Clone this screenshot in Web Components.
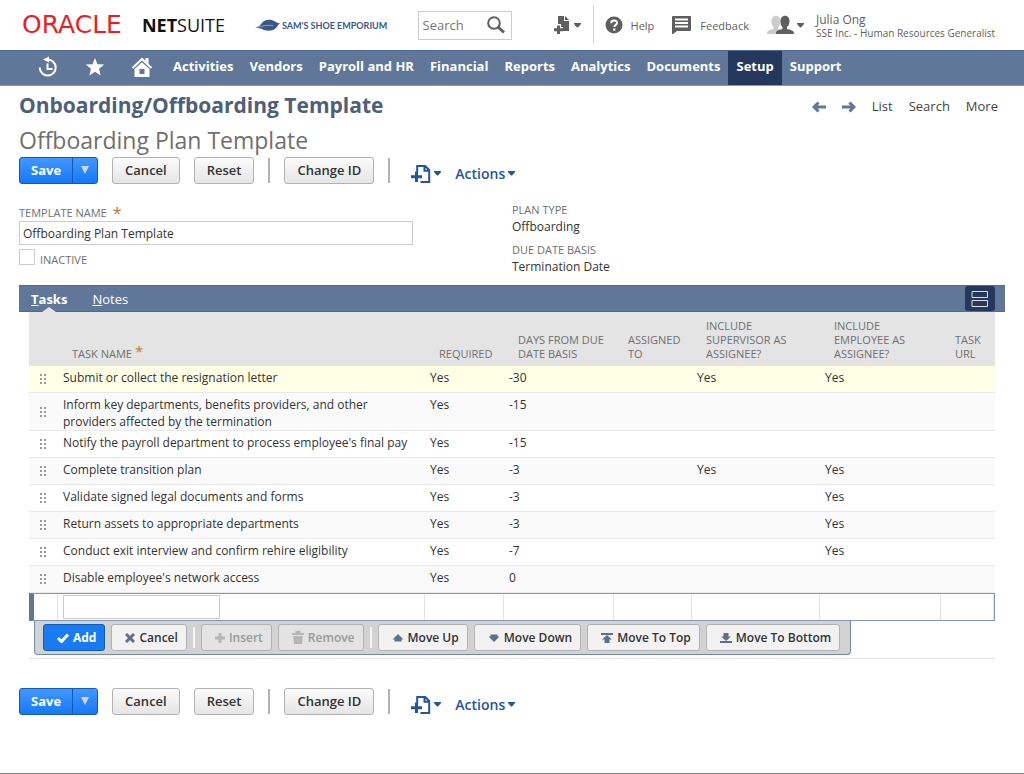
<!DOCTYPE html>
<html lang="en">
<head>
<meta charset="utf-8">
<meta name="viewport" content="width=device-width, initial-scale=1">
<title>Onboarding/Offboarding Template - NetSuite</title>
<style>
    html
    {
        background: #ffffff;
    }

    body
    {
        margin: 0;
        min-height: 100vh;
        box-sizing: border-box;
        border-bottom: 1px solid #8a8a8a;
        font-family: "Open Sans", "Noto Sans", sans-serif;
        font-size: 12px;
        line-height: 17px;
        color: #333333;
        --blue: #607799;
        --blue-line: #4d6a92;
        --navy: #24385b;
        --label: #6f6f6f;
        --link: #255599;
        --line: #cccccc;
    }

    main
    {
        padding: 0 19px;
    }
</style>
</head>
<body>
<ns-header></ns-header>
<ns-nav current="Setup"></ns-nav>
<main>
    <ns-page-title>
        <span slot="title">Onboarding/Offboarding Template</span>
        <span slot="record">Offboarding Plan Template</span>
    </ns-page-title>
    <ns-action-bar></ns-action-bar>
    <ns-record-form></ns-record-form>
    <ns-tab-panel>
        <ns-task-table></ns-task-table>
    </ns-tab-panel>
    <ns-action-bar></ns-action-bar>
</main>

<script>
const icons = {
    history: [22, 22, `<path d="M10 3.500A8 8 0 1 1 2.700 11.500" fill="none" stroke="currentColor" stroke-width="2"/><path d="M6 3.600 12 .5v6z" fill="currentColor"/><path d="M10.500 7.500v5.500h5" fill="none" stroke="currentColor" stroke-width="2"/>`],
    star: [20, 20, `<path d="M10 1l2.500 6.200 6.700.4-5.200 4.200 1.700 6.600L10 14.800l-5.700 3.600L6 11.800.8 7.600l6.700-.4z" fill="currentColor"/>`],
    home: [22, 20, `<path d="M1.500 11 11 2l9.500 9" fill="none" stroke="currentColor" stroke-width="2"/><path d="M14.500 1h3v6l-3-3z" fill="currentColor"/><path d="M11 5.200 18.500 12v8h-15v-8zM8.500 12v5h5v-5z" fill="currentColor" fill-rule="evenodd"/>`],
    search: [18, 18, `<circle cx="7" cy="7" r="5.800" fill="none" stroke="currentColor" stroke-width="2"/><path d="M11 11l6 5.500" stroke="currentColor" stroke-width="3"/>`],
    create: [18, 18, `<path d="M4 0h6v5h5v10H9v-4H7V8H4zM11 0l4 4h-4z" fill="currentColor"/><path d="M4.500 9.500v8.500M0 13.700h9" stroke="currentColor" stroke-width="3"/>`],
    addfile: [20, 20, `<path d="M6.200 9V2h8l4 4v12H9.500M13.500 2v4.700h4.700" fill="none" stroke="currentColor" stroke-width="2"/><path d="M5.500 7.500v10.500M0 12.700h11" stroke="currentColor" stroke-width="3"/>`],
    help: [18, 18, `<circle cx="9" cy="9" r="8.500" fill="currentColor"/><path d="M6.200 7.200c0-3.600 5.800-3.600 5.800-.3 0 2-2.700 2-2.700 4.200" fill="none" stroke="#fff" stroke-width="2"/><rect x="8.200" y="12.500" width="2.200" height="2.200" fill="#fff"/>`],
    feedback: [20, 18, `<path d="M1 0h17q1 0 1 1v13q0 1-1 1H5l-4 3H0V1q0-1 1-1z" fill="currentColor"/><path d="M3 3.500h13M3 7h13M3 10.500h13" stroke="#fff" stroke-width="2"/>`],
    people: [28, 20, `<g fill="#cccccc"><path d="M4.500 6c0-7 9-7 9 0 0 3-1 5-2.500 6v2c4 1 5 2 5 5H0c0-3 1-4 6.500-5v-2c-1.500-1-2-3-2-6z"/></g><path d="M13.500 6c0-7 9-7 9 0 0 3-1 5-2.500 6v2c5 1 7 2 7 5H9c0-3 1-4 6.500-5v-2c-1.500-1-2-3-2-6z" fill="currentColor"/>`],
    caret: [7, 5, `<path d="M0 0h7v1L4 4.500H3L0 1z" fill="currentColor"/>`],
    down: [8, 10, `<path d="M0 1h8L4 9z" fill="currentColor"/>`],
    left: [14, 12, `<path d="M6.500 1.500 2 6l4.500 4.500M2.500 6H14" fill="none" stroke="currentColor" stroke-width="3"/>`],
    right: [14, 12, `<path d="M7.500 1.500 12 6l-4.500 4.500M11.500 6H0" fill="none" stroke="currentColor" stroke-width="3"/>`],
    layout: [18, 18, `<path d="M1 1.500h15.500v6H1zM1 10.500h15.500v6H1z" fill="none" stroke="currentColor" stroke-width="1"/>`],
    grip: [8, 12, `<path d="M1 1h2v2H1zM5 1h2v2H5zM1 5h2v2H1zM5 5h2v2H5zM1 9h2v2H1zM5 9h2v2H5z" fill="currentColor"/>`],
    check: [12, 10, `<path d="M1 5l3.500 3.500L11 1.500" fill="none" stroke="currentColor" stroke-width="3"/>`],
    cross: [10, 10, `<path d="M1 1l8 8M9 1l-8 8" stroke="currentColor" stroke-width="3"/>`],
    plus: [10, 10, `<path d="M5 0v10M0 5h10" stroke="currentColor" stroke-width="3"/>`],
    trash: [12, 13, `<path d="M0 2h3.500V0h5v2H12v2H0zM1.200 5h9.600L10 13H2z" fill="currentColor"/>`],
    up: [12, 10, `<path d="M6 1l5.500 5.500H9.500v2h-7v-2H.5z" fill="currentColor"/>`],
    movedown: [12, 10, `<path d="M6 9l5.500-5.500H9.500v-2h-7v2H.5z" fill="currentColor"/>`],
    top: [12, 10, `<path d="M0 0h12v2H0zM6 2l5 4.500H8.500V10h-5V6.500H1z" fill="currentColor"/>`],
    bottom: [12, 10, `<path d="M0 8h12v2H0zM6 8l5-4.500H8.500V0h-5v3.500H1z" fill="currentColor"/>`],
    whale: [26, 12, `<path d="M0 8c3 0 4 0 6-3 2.500-4 9-5.500 13-3 2 1 4 2.500 7 2.500-3 0-3 2.500-5 4.500-4 4-11 3-14 1C5 9 3 9.500 0 8z" fill="currentColor"/><path d="M1 8.500c6-1 10-3 17-2" fill="none" stroke="#8ea0c0" stroke-width="1"/>`]
}

// Small helper so every element gets an open root the same way
const render = (el, html) =>
{
    const template = document.createElement("template")
    template.innerHTML = html
    el.attachShadow({mode:"open"}).append(template.content.cloneNode(true))
}

class NsIcon extends HTMLElement
{
    connectedCallback()
    {
        if (this.shadowRoot) return
        const [w, h, shape] = icons[this.getAttribute("name")]
        render(this, `
            <style>
                :host { display: inline-flex; flex: none; }
                svg { display: block; }
            </style>
            <svg width="${w}" height="${h}" viewBox="0 0 ${w} ${h}" aria-hidden="true">${shape}</svg>
        `)
    }
}
customElements.define("ns-icon", NsIcon)

class NsHeader extends HTMLElement
{
    constructor()
    {
        super()
        render(this, `
            <style>
                :host
                {
                    display: flex;
                    align-items: center;
                    height: 50px;
                    padding: 0 22px;
                    color: #5f5f5f;
                    font-size: 11px;
                    white-space: nowrap;
                }

                a
                {
                    color: inherit;
                    text-decoration: none;
                }

                .brand, .company, .tool
                {
                    display: flex;
                    align-items: center;
                }

                .brand
                {
                    width: 203px;
                    justify-content: space-between;
                    line-height: 20px;
                }

                .oracle
                {
                    color: #ee1c25;
                    font-family: "DejaVu Sans", sans-serif;
                    font-size: 25px;
                }

                .suite
                {
                    color: #111111;
                    font-size: 18px;
                }

                .company
                {
                    gap: 1px;
                    margin-left: 30px;
                    color: #3a5788;
                    font-family: Lato, sans-serif;
                    font-size: 9px;
                    font-weight: 700;
                }

                form
                {
                    display: flex;
                    align-items: center;
                    box-sizing: border-box;
                    width: 94px;
                    height: 29px;
                    margin: 0 42px 0 auto;
                    padding: 0 6px 0 4px;
                    border: 1px solid var(--line);
                }

                input
                {
                    flex: 1;
                    min-width: 0;
                    border: 0;
                    padding: 0;
                    outline: 0;
                    font: inherit;
                    font-size: 13px;
                    color: inherit;
                }

                input::placeholder
                {
                    color: #757575;
                    opacity: 1;
                }

                button
                {
                    display: flex;
                    align-items: center;
                    gap: 2px;
                    border: 0;
                    padding: 0;
                    background: none;
                    color: inherit;
                    font: inherit;
                }

                .rule
                {
                    align-self: stretch;
                    width: 1px;
                    margin: 5px 11px 6px 12px;
                    background: #d6d6d6;
                }

                .tool
                {
                    gap: 8px;
                    margin-right: 18px;
                }

                .who
                {
                    min-width: 186px;
                    margin-left: 12px;
                    padding-top: 2px;
                    font-size: 10px;
                    line-height: 12px;
                }

                .who b
                {
                    display: block;
                    font-size: 12px;
                    font-weight: 400;
                    line-height: 14px;
                }
            </style>
            <a class="brand" href="#"><span class="oracle">ORACLE</span><span class="suite"><b>NET</b>SUITE</span></a>
            <a class="company" href="#"><ns-icon name="whale"></ns-icon>SAM'S SHOE EMPORIUM</a>
            <form>
                <input type="text" placeholder="Search" aria-label="Search">
                <button type="button" aria-label="Go"><ns-icon name="search"></ns-icon></button>
            </form>
            <button type="button" aria-label="Create new"><ns-icon name="create"></ns-icon><ns-icon name="caret"></ns-icon></button>
            <span class="rule"></span>
            <a class="tool" href="#"><ns-icon name="help"></ns-icon>Help</a>
            <a class="tool" href="#"><ns-icon name="feedback"></ns-icon>Feedback</a>
            <button type="button" aria-label="Change role"><ns-icon name="people"></ns-icon><ns-icon name="caret"></ns-icon></button>
            <div class="who"><b>Julia Ong</b>SSE Inc. - Human Resources Generalist</div>
        `)
    }
}
customElements.define("ns-header", NsHeader)

class NsNav extends HTMLElement
{
    constructor()
    {
        super()
        const items = ["Activities", "Vendors", "Payroll and HR", "Financial", "Reports", "Analytics", "Documents", "Setup", "Support"]
        const current = this.getAttribute("current")
        render(this, `
            <style>
                :host
                {
                    display: block;
                    background: var(--blue);
                }

                nav
                {
                    display: flex;
                    height: 36px;
                    padding-left: 24px;
                    box-sizing: border-box;
                    border-top: 1px solid var(--blue-line);
                    border-bottom: 1px solid #8496b2;
                }

                a
                {
                    display: flex;
                    align-items: center;
                    padding: 0 8px 3px;
                    color: #ffffff;
                    font-size: 13px;
                    font-weight: 700;
                    text-decoration: none;
                    white-space: nowrap;
                }

                .pic
                {
                    box-sizing: border-box;
                    width: 47px;
                    justify-content: center;
                }

                .current
                {
                    background: var(--navy);
                }
            </style>
            <nav>
                <a class="pic" href="#" aria-label="Recent records"><ns-icon name="history"></ns-icon></a>
                <a class="pic" href="#" aria-label="Shortcuts"><ns-icon name="star"></ns-icon></a>
                <a class="pic" href="#" aria-label="Home"><ns-icon name="home"></ns-icon></a>
                ${items.map(i => `<a href="#" class="${i === current ? "current" : ""}">${i}</a>`).join("")}
            </nav>
        `)
    }
}
customElements.define("ns-nav", NsNav)

class NsPageTitle extends HTMLElement
{
    constructor()
    {
        super()
        render(this, `
            <style>
                :host
                {
                    display: flex;
                    justify-content: space-between;
                    align-items: flex-start;
                    padding-top: 1px;
                }

                h1, h2
                {
                    margin: 0;
                }

                h1
                {
                    color: #4d5f79;
                    font-size: 21px;
                    font-weight: 700;
                    line-height: 36px;
                }

                h2
                {
                    color: #6f6f6f;
                    font-size: 23px;
                    font-weight: 400;
                    line-height: 34px;
                }

                nav
                {
                    display: flex;
                    align-items: center;
                    gap: 16px;
                    height: 39px;
                    padding-right: 7px;
                    font-size: 13px;
                }

                a
                {
                    color: #444444;
                    text-decoration: none;
                }

                .arrow
                {
                    display: flex;
                    color: var(--blue);
                }
            </style>
            <div>
                <h1><slot name="title"></slot></h1>
                <h2><slot name="record"></slot></h2>
            </div>
            <nav>
                <a class="arrow" href="#" aria-label="Previous"><ns-icon name="left"></ns-icon></a>
                <a class="arrow" href="#" aria-label="Next"><ns-icon name="right"></ns-icon></a>
                <a href="#">List</a>
                <a href="#">Search</a>
                <a href="#">More</a>
            </nav>
        `)
    }
}
customElements.define("ns-page-title", NsPageTitle)

class NsButton extends HTMLElement
{
    connectedCallback()
    {
        if (this.shadowRoot) return
        const icon = this.getAttribute("icon")
        render(this, `
            <style>
                :host
                {
                    display: inline-flex;
                }

                button
                {
                    display: flex;
                    align-items: center;
                    gap: 4px;
                    box-sizing: border-box;
                    height: 27px;
                    padding: 0 12px;
                    border: 1px solid #b2b2b2;
                    border-radius: 3px;
                    background: linear-gradient(#fbfbfb, #e5e5e5);
                    color: #333333;
                    font: inherit;
                    font-size: 13px;
                    font-weight: 600;
                    white-space: nowrap;
                }

                ns-icon
                {
                    color: #607089;
                }

                :host([compact]) button
                {
                    padding: 0 8px 0 13px;
                    background: #f2f2f2;
                    font-size: 12px;
                }

                :host([primary]) button
                {
                    border-color: #125ab2;
                    background: #187bf2;
                    color: #ffffff;
                    font-weight: 700;
                }

                :host([primary]) ns-icon
                {
                    color: #ffffff;
                }

                :host([disabled]) button
                {
                    background: #e3e3e3;
                    color: #999999;
                }

                :host([disabled]) ns-icon
                {
                    color: #b5b5b5;
                }
            </style>
            <button type="button" ${this.hasAttribute("disabled") ? "disabled" : ""}>
                ${icon ? `<ns-icon name="${icon}"></ns-icon>` : ""}<slot></slot>
            </button>
        `)
    }
}
customElements.define("ns-button", NsButton)

class NsActionBar extends HTMLElement
{
    constructor()
    {
        super()
        render(this, `
            <style>
                :host
                {
                    display: flex;
                    align-items: center;
                    gap: 14px;
                    height: 27px;
                }

                .split
                {
                    display: flex;
                    height: 27px;
                    box-sizing: border-box;
                    border: 1px solid #125ab2;
                    border-radius: 3px;
                    overflow: hidden;
                    background: linear-gradient(#4297ff, #1579f5);
                }

                .split button
                {
                    border: 0;
                    padding: 0 11px;
                    background: none;
                    color: #ffffff;
                    font: inherit;
                    font-size: 13px;
                    font-weight: 700;
                }

                .split .more
                {
                    padding: 0 8px;
                    border-left: 1px solid #125ab2;
                    color: #cfd6e0;
                }

                .rule
                {
                    width: 2px;
                    height: 25px;
                    background: #b3b3b3;
                }

                .menu
                {
                    display: flex;
                    align-items: center;
                    gap: 3px;
                    padding: 6px 0 0;
                    border: 0;
                    background: none;
                    color: var(--link);
                    font: inherit;
                    font-size: 14px;
                    font-weight: 600;
                }

                .file
                {
                    margin-left: 7px;
                }
            </style>
            <div class="split">
                <button type="button">Save</button>
                <button type="button" class="more" aria-label="More save options"><ns-icon name="down"></ns-icon></button>
            </div>
            <ns-button>Cancel</ns-button>
            <ns-button>Reset</ns-button>
            <span class="rule"></span>
            <ns-button>Change ID</ns-button>
            <span class="rule"></span>
            <button type="button" class="menu file" aria-label="New"><ns-icon name="addfile"></ns-icon><ns-icon name="caret"></ns-icon></button>
            <button type="button" class="menu">Actions<ns-icon name="caret"></ns-icon></button>
        `)
    }
}
customElements.define("ns-action-bar", NsActionBar)

class NsRecordForm extends HTMLElement
{
    constructor()
    {
        super()
        render(this, `
            <style>
                :host
                {
                    display: grid;
                    grid-template-columns: 1fr 1fr;
                    padding: 18px 0 3px;
                }

                label, dt
                {
                    color: var(--label);
                    font-size: 11px;
                }

                .name
                {
                    display: flex;
                    align-items: center;
                    gap: 6px;
                    padding-top: 2px;
                }

                sup
                {
                    color: #c17b1e;
                    font-size: 16px;
                    line-height: 12px;
                }

                input[type=text]
                {
                    display: block;
                    box-sizing: border-box;
                    width: 80%;
                    height: 24px;
                    padding: 0 3px;
                    border: 1px solid var(--line);
                    color: #333333;
                    font: inherit;
                }

                .inactive
                {
                    display: flex;
                    align-items: flex-start;
                    gap: 5px;
                    margin-top: 4px;
                }

                .inactive label
                {
                    padding-top: 2px;
                }

                input[type=checkbox]
                {
                    appearance: none;
                    width: 16px;
                    height: 16px;
                    margin: 0;
                    border: 1px solid var(--line);
                }

                dl
                {
                    margin: 0;
                }

                dt
                {
                    line-height: 16px;
                }

                dd
                {
                    margin: 0 0 7px;
                }
            </style>
            <div>
                <label class="name" for="name">TEMPLATE NAME <sup>*</sup></label>
                <input id="name" type="text" value="Offboarding Plan Template">
                <div class="inactive">
                    <input id="inactive" type="checkbox">
                    <label for="inactive">INACTIVE</label>
                </div>
            </div>
            <dl>
                <dt>PLAN TYPE</dt>
                <dd>Offboarding</dd>
                <dt>DUE DATE BASIS</dt>
                <dd>Termination Date</dd>
            </dl>
        `)
    }
}
customElements.define("ns-record-form", NsRecordForm)

class NsTabPanel extends HTMLElement
{
    constructor()
    {
        super()
        render(this, `
            <style>
                :host
                {
                    display: block;
                    margin-bottom: 29px;
                }

                .bar
                {
                    display: flex;
                    align-items: stretch;
                    box-sizing: border-box;
                    height: 27px;
                    padding: 0 10px 0 12px;
                    border: solid var(--blue-line);
                    border-width: 1px 0;
                    background: var(--blue);
                }

                a
                {
                    position: relative;
                    margin-right: 25px;
                    color: #ffffff;
                    font-size: 13px;
                    line-height: 26px;
                    text-decoration: none;
                }

                .current
                {
                    font-weight: 700;
                }

                .current::after
                {
                    content: "";
                    position: absolute;
                    left: 50%;
                    bottom: -1px;
                    margin-left: -7px;
                    border: solid transparent;
                    border-width: 0 7px 5px;
                    border-bottom-color: #e4e4e4;
                }

                button
                {
                    display: flex;
                    align-items: center;
                    margin-left: auto;
                    padding: 0 6px;
                    border: 0;
                    border-radius: 3px;
                    background: var(--navy);
                    color: #dddddd;
                }

                .body
                {
                    margin: 0 10px;
                }
            </style>
            <div class="bar">
                <a class="current" href="#"><u>T</u>asks</a>
                <a href="#"><u>N</u>otes</a>
                <button type="button" aria-label="Toggle layout"><ns-icon name="layout"></ns-icon></button>
            </div>
            <div class="body"><slot></slot></div>
        `)
    }
}
customElements.define("ns-tab-panel", NsTabPanel)

const tasks = [
    ["Submit or collect the resignation letter", "-30", "Yes", "Yes"],
    ["Inform key departments, benefits providers, and other<br>providers affected by the termination", "-15", "", ""],
    ["Notify the payroll department to process employee's final pay", "-15", "", ""],
    ["Complete transition plan", "-3", "Yes", "Yes"],
    ["Validate signed legal documents and forms", "-3", "", "Yes"],
    ["Return assets to appropriate departments", "-3", "", "Yes"],
    ["Conduct exit interview and confirm rehire eligibility", "-7", "", "Yes"],
    ["Disable employee's network access", "0", "", ""]
]

class NsTaskTable extends HTMLElement
{
    constructor()
    {
        super()
        render(this, `
            <style>
                :host
                {
                    display: block;
                    padding-bottom: 3px;
                    border-bottom: 1px solid #e6e6e6;
                }

                table
                {
                    width: 100%;
                    table-layout: fixed;
                    border-collapse: separate;
                    border-spacing: 0;
                }

                th
                {
                    height: 54px;
                    box-sizing: border-box;
                    padding: 0 10px 5px 14px;
                    background: #e4e4e4;
                    color: var(--label);
                    font-size: 11px;
                    font-weight: 400;
                    line-height: 14px;
                    text-align: left;
                    vertical-align: bottom;
                }

                sup
                {
                    margin-left: 3px;
                    color: #c17b1e;
                    font-size: 15px;
                    line-height: 0;
                    vertical-align: 1px;
                }

                td
                {
                    padding: 3px 5px 6px;
                    border-bottom: 1px solid #e9e9e9;
                    vertical-align: top;
                }

                tr:nth-child(even) td
                {
                    background: #fafafa;
                }

                tbody tr:first-child td
                {
                    background: #ffffe5;
                }

                .wide td
                {
                    padding-bottom: 0;
                }

                td.grip
                {
                    padding: 0 0 2px 10px;
                    color: #999999;
                    vertical-align: middle;
                }

                .grip ns-icon
                {
                    vertical-align: middle;
                }

                tbody .edit td
                {
                    height: 28px;
                    box-sizing: border-box;
                    padding: 1px 5px;
                    border: solid #8297bb;
                    border-width: 1px 0;
                    background: linear-gradient(#e2e2e2, #e2e2e2) right / 1px 100% no-repeat #ffffff;
                }

                tbody .edit td:first-child
                {
                    border-left: 5px solid var(--blue);
                }

                tbody .edit td:last-child
                {
                    border-right: 1px solid #8297bb;
                }

                input
                {
                    display: block;
                    box-sizing: border-box;
                    width: 157px;
                    height: 24px;
                    border: 1px solid var(--line);
                    font: inherit;
                }

                .tools
                {
                    display: flex;
                    width: max-content;
                    gap: 6px;
                    margin-left: 5px;
                    padding: 3px 10px 3px 8px;
                    border: 1px solid #7088ad;
                    border-top: 0;
                    border-radius: 0 0 4px 4px;
                    background: #d2d2d2;
                }

                .rule
                {
                    width: 2px;
                    margin: 3px 0;
                    background: #f5f5f5;
                }
            </style>
            <table>
                <colgroup>
                    <col style="width: 29px"><col><col style="width: 79px"><col style="width: 110px">
                    <col style="width: 78px"><col style="width: 128px"><col style="width: 121px"><col style="width: 54px">
                </colgroup>
                <thead>
                    <tr>
                        <th></th>
                        <th>TASK NAME<sup>*</sup></th>
                        <th>REQUIRED</th>
                        <th>DAYS FROM DUE DATE BASIS</th>
                        <th>ASSIGNED TO</th>
                        <th>INCLUDE SUPERVISOR AS ASSIGNEE?</th>
                        <th>INCLUDE EMPLOYEE AS ASSIGNEE?</th>
                        <th>TASK URL</th>
                    </tr>
                </thead>
                <tbody>
                    ${tasks.map(([name, days, sup, emp]) => `
                        <tr class="${name.includes("<br>") ? "wide" : ""}">
                            <td class="grip"><ns-icon name="grip"></ns-icon></td>
                            <td>${name}</td>
                            <td>Yes</td>
                            <td>${days}</td>
                            <td></td>
                            <td>${sup}</td>
                            <td>${emp}</td>
                            <td></td>
                        </tr>`).join("")}
                    <tr class="edit">
                        <td></td>
                        <td><input type="text" aria-label="Task name"></td>
                        <td></td><td></td><td></td><td></td><td></td><td></td>
                    </tr>
                </tbody>
            </table>
            <div class="tools">
                <ns-button compact primary icon="check">Add</ns-button>
                <ns-button compact icon="cross">Cancel</ns-button>
                <span class="rule"></span>
                <ns-button compact disabled icon="plus">Insert</ns-button>
                <ns-button compact disabled icon="trash">Remove</ns-button>
                <span class="rule"></span>
                <ns-button compact icon="up">Move Up</ns-button>
                <ns-button compact icon="movedown">Move Down</ns-button>
                <ns-button compact icon="top">Move To Top</ns-button>
                <ns-button compact icon="bottom">Move To Bottom</ns-button>
            </div>
        `)
    }
}
customElements.define("ns-task-table", NsTaskTable)
</script>
</body>
</html>
